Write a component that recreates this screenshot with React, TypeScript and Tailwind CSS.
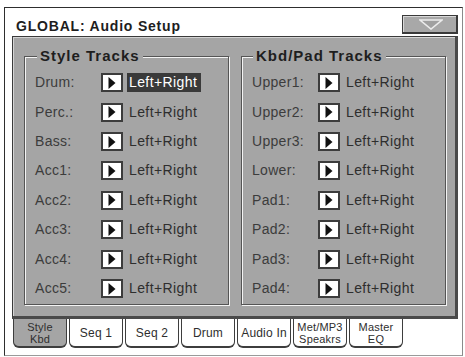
import type { ReactNode } from 'react'

const STYLE_TRACKS = ['Drum:', 'Perc.:', 'Bass:', 'Acc1:', 'Acc2:', 'Acc3:', 'Acc4:', 'Acc5:']
const KBD_TRACKS = ['Upper1:', 'Upper2:', 'Upper3:', 'Lower:', 'Pad1:', 'Pad2:', 'Pad3:', 'Pad4:']

const TABS: { label: ReactNode; twoLine?: boolean; selected?: boolean }[] = [
  { label: <>Style<br />Kbd</>, twoLine: true, selected: true },
  { label: 'Seq 1' },
  { label: 'Seq 2' },
  { label: 'Drum' },
  { label: 'Audio In' },
  { label: <>Met/MP3<br />Speakrs</>, twoLine: true },
  { label: <>Master<br />EQ</>, twoLine: true },
]

function ArrowBox() {
  return (
    <div className="flex h-[19px] w-[22px] shrink-0 items-center justify-center border-2 border-[#3c3c3c] bg-white">
      <svg width="8" height="12" viewBox="0 0 8 12">
        <path d="M0.5 0 L7.5 6 L0.5 12 Z" fill="#111" />
      </svg>
    </div>
  )
}

function TrackRow({ label, selected }: { label: string; selected?: boolean }) {
  return (
    <div className="flex h-[29.43px] items-center">
      <span className="w-[66px] shrink-0 text-[14px] tracking-[0.3px] text-[#3c3c3c]">{label}</span>
      <ArrowBox />
      <span
        className={`ml-[4px] flex h-[19px] items-center px-[2px] text-[14px] tracking-[0.4px] ${
          selected ? 'w-[74px] bg-[#3a3a3a] text-white' : 'text-[#2e2e2e]'
        }`}
      >
        Left+Right
      </span>
    </div>
  )
}

function Group({ title, rows, titleLeft }: { title: string; rows: string[]; titleLeft: string }) {
  return (
    <div className="relative h-[249px] w-[205px] border border-[#555] shadow-[1px_1px_0_#f4f4f4,inset_1px_1px_0_#f4f4f4]">
      <span
        className={`absolute top-[-10px] ${titleLeft} bg-[#a5a5a5] px-[3px] text-[15px] leading-[18px] font-bold tracking-[1px] text-[#1e1e1e]`}
      >
        {title}
      </span>
      <div className="flex flex-col pl-[10px] pt-[11px]">
        {rows.map((r, i) => (
          <TrackRow key={r} label={r} selected={title === 'Style Tracks' && i === 0} />
        ))}
      </div>
    </div>
  )
}

export default function App() {
  return (
    <div
      className="h-[357px] w-[465px] overflow-hidden bg-white pl-[4px] pt-[7px]"
      style={{ fontFamily: '"Liberation Sans", Arial, sans-serif' }}
    >
      <div className="flex h-[349px] w-[459px] flex-col border border-[#2e2e2e] border-b-[#9a9a9a] border-r-[#8a8a8a] bg-white">
        <header className="flex h-[28px] items-end justify-between pb-[2px] pl-[11px] pr-[4px]">
          <h1 className="text-[14px] leading-[16px] font-bold tracking-[0.8px] text-[#1e1e1e]">
            GLOBAL: Audio Setup
          </h1>
          <button
            type="button"
            className="flex h-[19px] w-[56px] items-center justify-center border border-[#3a3a3a] border-b-2 border-r-2 bg-[#a8a8a8] pl-[3px] shadow-[inset_1px_1px_0_#d8d8d8]"
          >
            <svg width="24" height="11" viewBox="0 0 24 11">
              <path d="M1 1 L23 1 L12 10 Z" fill="#a0a0a0" stroke="#ececec" strokeWidth="1.6" strokeLinejoin="miter" />
            </svg>
          </button>
        </header>

        <section className="ml-[7px] h-[283px] w-[446px] border border-[#3a3a3a] border-b-[3px] border-r-[3px] border-b-[#4a4a4a] border-r-[#4a4a4a] bg-[#a5a5a5] shadow-[inset_1px_1px_0_#d4d4d4]">
          <div className="flex gap-[12px] pl-[11px] pt-[19px]">
            <Group title="Style Tracks" rows={STYLE_TRACKS} titleLeft="left-[12px]" />
            <Group title="Kbd/Pad Tracks" rows={KBD_TRACKS} titleLeft="left-[11px]" />
          </div>
        </section>

        <nav className="ml-[8px] flex gap-[2px]">
          {TABS.map((t, i) => (
            <div
              key={i}
              className={`flex h-[29px] w-[54px] items-center justify-center rounded-b-[6px] border border-t-0 border-[#3e3e3e] border-b-2 text-center tracking-[0.2px] text-[#2e2e2e] ${
                t.twoLine ? 'text-[11px] leading-[12px]' : 'text-[12px] leading-[14px]'
              } ${t.selected ? 'bg-[#a5a5a5]' : 'bg-white'}`}
            >
              <span>{t.label}</span>
            </div>
          ))}
        </nav>
      </div>
    </div>
  )
}
